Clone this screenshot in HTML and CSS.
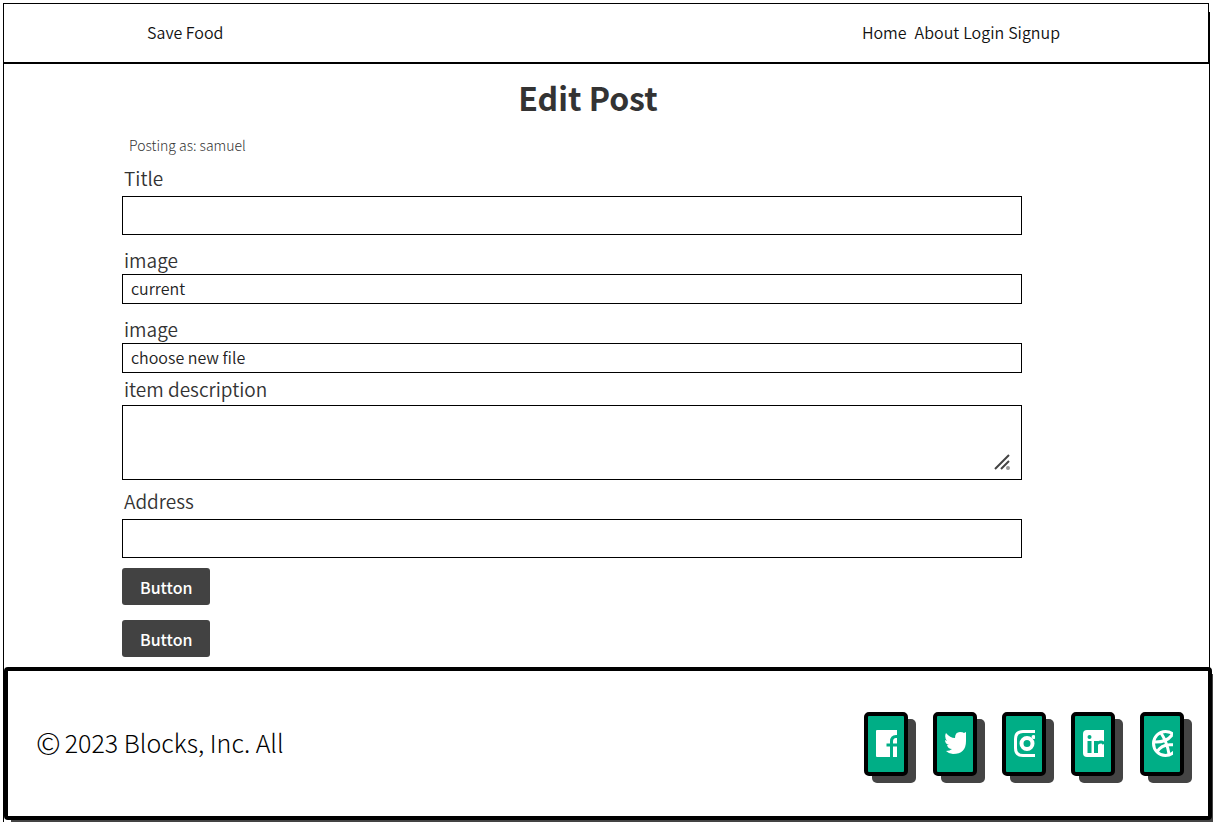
FILE: index.html
```html
<!DOCTYPE html>
<html lang="en">
<head>
<meta charset="utf-8">
<title>Edit Post</title>
<link rel="stylesheet" href="styles.css">
</head>
<body>
<div class="page">
  <header class="header">
    <a class="brand" href="#">Save Food</a>
    <nav class="nav">
      <a class="nav-home" href="#">Home</a>
      <a href="#">About</a>
      <a href="#">Login</a>
      <a href="#">Signup</a>
    </nav>
  </header>
  <main class="main">
    <h1 class="title">Edit Post</h1>
    <form class="form">
      <p class="author">Posting as: samuel</p>
      <div class="field field-title">
        <label for="title">Title</label>
        <input class="box box-tall" id="title" type="text">
      </div>
      <div class="field field-image">
        <label for="current">image</label>
        <input class="box" id="current" type="text" value="current">
      </div>
      <div class="field field-file">
        <label for="file">image</label>
        <input class="box" id="file" type="text" value="choose new file">
      </div>
      <div class="field field-text">
        <label for="description">item description</label>
        <div class="area">
          <textarea class="box box-area" id="description"></textarea>
          <svg class="grip" viewBox="0 0 16 16" aria-hidden="true"><path d="M1 15 15 1M7 15l8-8"/><circle cx="14" cy="14" r="2"/></svg>
        </div>
      </div>
      <div class="field field-address">
        <label for="address">Address</label>
        <input class="box box-tall" id="address" type="text">
      </div>
      <div class="actions">
        <button class="button" type="button">Button</button>
        <button class="button" type="button">Button</button>
      </div>
    </form>
  </main>
  <footer class="footer">
    <p class="copyright"><span class="mark">©</span> 2023 Blocks, Inc. All</p>
    <div class="social">
      <a class="tile" href="#" aria-label="Facebook"><svg viewBox="0 0 21 27"><rect width="23" height="27" rx="1" fill="#fff"/><path fill="none" stroke="#00ae86" stroke-width="3" d="M21 6.500h-1q-4.500 0-4.500 5V27M10.500 15H21"/></svg></a>
      <a class="tile" href="#" aria-label="Twitter"><svg viewBox="0 0 21 27"><path fill="#fff" d="M1 3q4 5 9 5Q10 2 15 2q3 0 4 1l2-1v9q0 13-13 13-4 0-7-3 4 0 6-2-4 0-5-4h2Q0 14 0 10l2 1Q-1 7 1 3z"/></svg></a>
      <a class="tile" href="#" aria-label="Instagram"><svg viewBox="0 0 21 27"><path fill="none" stroke="#fff" stroke-width="3" d="M22 1.500H9Q1.500 1.500 1.500 9v9q0 7.500 7.500 7.500h13"/><circle cx="13" cy="13.500" r="5.500" fill="none" stroke="#fff" stroke-width="4"/><circle cx="19.500" cy="7" r="2" fill="#fff"/></svg></a>
      <a class="tile" href="#" aria-label="LinkedIn"><svg viewBox="0 0 21 27"><rect width="27" height="27" rx="4" fill="#fff"/><circle cx="6.500" cy="7" r="2" fill="#00ae86"/><path fill="none" stroke="#00ae86" stroke-width="4" d="M6.500 11v12M13 11v12"/><path fill="none" stroke="#00ae86" stroke-width="3" d="M13 15q2-3 5-3 2 0 3 2"/></svg></a>
      <a class="tile" href="#" aria-label="Dribbble"><svg viewBox="0 0 21 27"><g fill="none" stroke="#fff" stroke-width="3"><circle cx="13.500" cy="13.500" r="12"/><path d="M1 12q13 1 19-7M9 3q6 9 8 21M5 22q5-9 17-7"/></g></svg></a>
    </div>
  </footer>
</div>
</body>
</html>
```
FILE: styles.css
```css
* { box-sizing: border-box; }
body {
  margin: 0;
  padding: 12px 3px 0;
  background: #fff;
  color: #333;
  font-family: "Noto Sans CJK SC", "Noto Sans", sans-serif;
  overflow-x: clip;
}
.page {
  min-height: calc(100vh - 12px);
  border: 1px solid #000;
  border-bottom: 0;
}
.header {
  display: flex;
  justify-content: space-between;
  align-items: center;
  height: 61px;
  margin: -10px 0 0 -1px;
  padding: 0 148px 2px 143px;
  background: #fff;
  border: 1px solid #000;
  border-bottom-width: 2px;
  font-size: 16px;
  line-height: 24px;
  font-weight: 350;
}
.header a { color: #111; text-decoration: none; }
.nav { display: flex; gap: 4px; }
.nav-home { padding-right: 4px; }
.main { padding: 9px 0 10px; }
.title {
  margin: 0;
  padding-right: 37px;
  text-align: center;
  font-size: 32px;
  line-height: 48px;
}
.form {
  display: flex;
  flex-direction: column;
  margin: 0 187px 0 118px;
}
.author {
  margin: 14px 0 9px;
  padding-left: 7px;
  font-size: 14px;
  line-height: 20px;
  font-weight: 300;
}
.field { display: flex; flex-direction: column; }
.field label {
  align-self: flex-start;
  padding-left: 2px;
  font-size: 19px;
  line-height: 28px;
  font-weight: 350;
}
.box {
  display: block;
  width: 100%;
  height: 30px;
  margin: 0;
  padding: 0 8px 3px;
  border: 1px solid #000;
  border-radius: 0;
  background: #fff;
  color: #222;
  font: 350 16px/24px "Noto Sans CJK SC", "Noto Sans", sans-serif;
}
.box-tall { height: 39px; }
.box-area { height: 75px; resize: none; }
.field-title, .field-address { gap: 4px; }
.field-text { gap: 2px; }
.field-title, .field-image { margin-bottom: 11px; }
.field-file { margin-bottom: 2px; }
.field-text { margin-bottom: 7px; }
.area { position: relative; }
.grip {
  position: absolute;
  right: 12px;
  bottom: 10px;
  width: 16px;
  height: 16px;
  fill: #999;
  stroke: #444;
  stroke-width: 2;
}
.grip circle { stroke: none; }
.actions {
  display: flex;
  flex-direction: column;
  align-items: flex-start;
  gap: 15px;
  margin-top: 10px;
}
.button {
  height: 37px;
  padding: 0 18px;
  border: 0;
  border-radius: 3px;
  background: #424242;
  color: #fff;
  font: 500 16px/24px "Noto Sans CJK SC", "Noto Sans", sans-serif;
}
.footer {
  display: flex;
  justify-content: space-between;
  align-items: center;
  height: 153px;
  margin-right: -3px;
  padding: 0 24px 0 28px;
  background: #fff;
  border: 4px solid #000;
  border-radius: 4px;
  box-shadow: 7px 7px 0 #444;
}
.copyright {
  display: flex;
  align-items: center;
  gap: 4px;
  margin: 0;
  padding-bottom: 4px;
  color: #000;
  font-size: 25px;
  line-height: 36px;
  font-weight: 300;
}
.mark { font-size: 30px; }
.social { display: flex; gap: 25px; }
.tile {
  display: flex;
  align-items: center;
  justify-content: center;
  width: 44px;
  height: 64px;
  background: #00ae86;
  border: 4px solid #000;
  border-radius: 5px;
  box-shadow: 8px 7px 0 #444;
}
.tile svg { width: 21px; height: 27px; }
```
